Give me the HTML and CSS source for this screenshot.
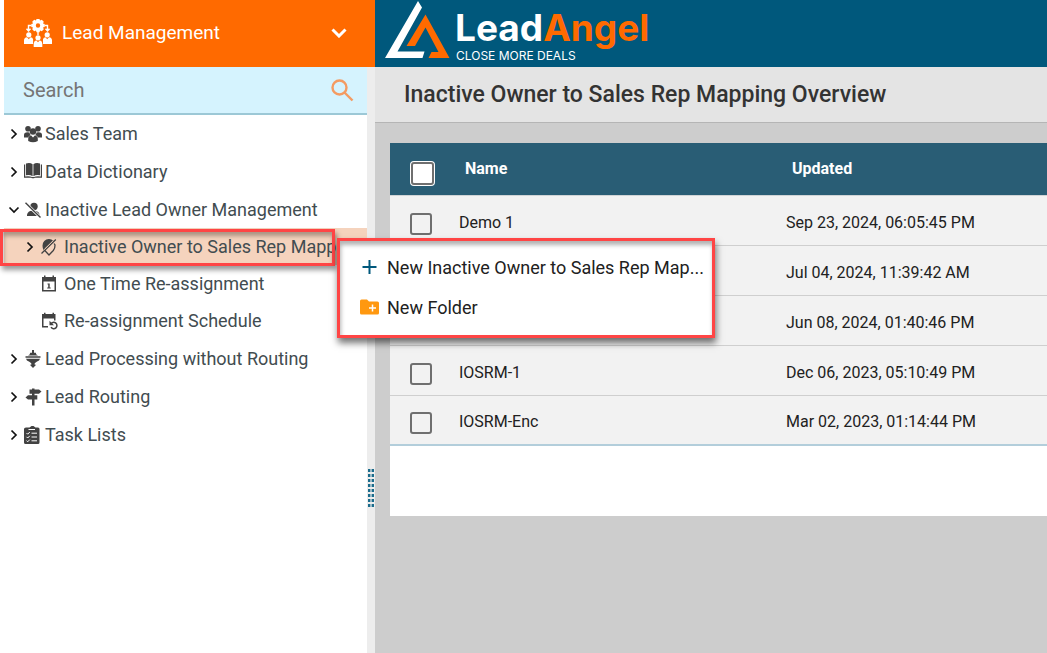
FILE: index.html
```html
<!DOCTYPE html>
<html lang="en">
<head>
  <meta charset="UTF-8">
  <meta name="viewport" content="width=device-width, initial-scale=1.0">
  <title>LeadAngel - Inactive Owner to Sales Rep Mapping</title>
  <link rel="stylesheet" href="styles.css">
</head>
<body>

  <aside class="sidebar">
    <button class="module" type="button">
      <svg class="module-icon" viewBox="0 0 28 28" fill="currentColor">
        <path fill-rule="evenodd" d="M12.500 0h3l.5 1.600 1.800-.8 2 2-.8 1.700 1.700.5v3l-1.700.5.8 1.800-2 2-1.800-.8-.5 1.700h-3l-.5-1.700-1.800.8-2-2 .8-1.800L7.300 8V5l1.700-.5-.8-1.700 2-2 1.800.8zM14 4.300a2.200 2.200 0 1 0 0 4.400a2.200 2.200 0 0 0 0-4.400z"/>
        <path d="M7.500 6.500H4.500V12M20.500 6.500h3V12M14 12v4M2.500 9.800l2 2.200 2-2.200M21.500 9.800l2 2.200 2-2.200" fill="none" stroke="currentColor" stroke-width="1.400"/>
        <circle cx="4.800" cy="15.800" r="2.600"/>
        <circle cx="23.200" cy="15.800" r="2.600"/>
        <circle cx="14" cy="18.800" r="2.600"/>
        <path d="M0 25v-3.500q0-2.800 3-3.200l1.800 2 1.800-2q2 .2 2.500 2V25zM19 25v-4.700q.5-1.800 2.500-2l1.700 2 1.800-2q3 .4 3 3.200V25zM9.700 28v-3.300q0-2.800 2.500-3.400l1.800 2 1.800-2q2.500.6 2.500 3.400V28z"/>
      </svg>
      <span class="module-name">Lead Management</span>
      <svg class="module-arrow" viewBox="0 0 16 10" fill="none" stroke="currentColor" stroke-width="3"><path d="M1.500 1.500L8 8l6.500-6.500"/></svg>
    </button>

    <div class="sidebar-body">
      <nav class="panel">
        <div class="search">
          <input type="text" placeholder="Search" aria-label="Search">
          <svg viewBox="0 0 24 24" fill="none" stroke="currentColor" stroke-width="2.400"><circle cx="9.500" cy="9.500" r="7"/><path d="M14.500 14.500l8 8"/></svg>
        </div>

        <ul class="tree">
          <li>
            <a class="node" href="#">
              <svg class="arrow" viewBox="0 0 12 12"><path d="M3.500 1.500L8 6l-4.500 4.500"/></svg>
              <svg class="icon" viewBox="0 0 18 18">
                <circle cx="4" cy="3.700" r="2.800"/><circle cx="14" cy="3.700" r="2.800"/><circle cx="9" cy="6.500" r="3.200"/>
                <path d="M0 12.500V10q0-2.800 3.500-2.800 1.300 0 2 .4.300 1.700 1.200 2.400Q4.500 11 4 12.500zM18 12.500V10q0-2.800-3.500-2.800-1.300 0-2 .4-.3 1.700-1.200 2.400 2.200.7 2.700 2.500zM4.200 16v-2.300q.2-2.900 3-3.100L9 12.500l1.800-1.900q2.800.2 3 3.100V16Q9 18.400 4.200 16z"/>
              </svg>
              <span>Sales Team</span>
            </a>
          </li>
          <li>
            <a class="node" href="#">
              <svg class="arrow" viewBox="0 0 12 12"><path d="M3.500 1.500L8 6l-4.500 4.500"/></svg>
              <svg class="icon" viewBox="0 0 18 18">
                <path d="M2 .5Q6-.7 8.600 1.200v12Q6 11.500 2 12.300zM16 .5Q12-.7 9.400 1.200v12q2.600-1.700 6.600-.9z"/>
                <path d="M0 1.500h1.200v12q4-.9 6.800.6h2q2.800-1.500 6.800-.6v-12H18V14.700h-7.200l-.8.600H8l-.8-.6H0z"/>
              </svg>
              <span>Data Dictionary</span>
            </a>
          </li>
          <li>
            <a class="node" href="#">
              <svg class="arrow" viewBox="0 0 12 12"><path d="M1.500 3.500L6 8l4.500-4.500"/></svg>
              <svg class="icon" viewBox="0 0 18 18">
                <circle cx="10" cy="5.500" r="3.700"/><path d="M3 15v-1.500q1-3.500 5-3.700h3q4 .5 4.500 3.700V15z"/>
                <path d="M2.500 3L15.500 15.500" stroke="#fff" stroke-width="3"/><path d="M1.500 1.700L16.500 16.500" stroke="#424242" stroke-width="1.400"/>
              </svg>
              <span>Inactive Lead Owner Management</span>
            </a>
            <ul>
              <li class="selected">
                <a class="node" href="#">
                  <svg class="arrow" viewBox="0 0 12 12"><path d="M3.500 1.500L8 6l-4.500 4.500"/></svg>
                  <svg class="icon" viewBox="0 0 18 18">
                    <path d="M9 1a6 6 0 0 1 4.300 1.700L3.500 12Q2.500 10 2.500 7.700A6.300 6.300 0 0 1 9 1z"/>
                    <path d="M4.800 12.500L9 17l4.300-4.500q1.900-2.300 1.700-5.500l-1-1.500M1.500 15.500L15.800 1.500" fill="none" stroke="#424242" stroke-width="1.300"/>
                    <path d="M4.500 11.200L13 2.800" fill="none" stroke="#f5d3bd" stroke-width="1"/>
                  </svg>
                  <span>Inactive Owner to Sales Rep Mapping</span>
                </a>
                <div class="frame"></div>
                <div class="menu">
                  <button type="button">
                    <svg viewBox="0 0 20 20" fill="none" stroke="#00587c" stroke-width="2"><path d="M9.500 3v14M2.500 10h14"/></svg>
                    <span>New Inactive Owner to Sales Rep Map...</span>
                  </button>
                  <button type="button">
                    <svg viewBox="0 0 20 20"><path fill="#ff9810" d="M1.500 2.500H7l2 2h8.500q1.500 0 1.500 1.500v10q0 1.500-1.500 1.500h-16Q0 17.500 0 16V4q0-1.500 1.500-1.500z"/><path d="M12.500 7.500v7M9 11h7" stroke="#fff" stroke-width="1.500"/></svg>
                    <span>New Folder</span>
                  </button>
                </div>
              </li>
              <li>
                <a class="node leaf" href="#">
                  <svg class="icon" viewBox="0 0 18 18">
                    <path fill-rule="evenodd" d="M4 .5h1.500V2h7V.5H14V2h2v14.500H2V2h2zM3.500 6.500V15h11V6.500z"/>
                    <path d="M7.500 8.500h2.200v4h1v1H7.200v-1h1v-3h-.7z"/>
                  </svg>
                  <span>One Time Re-assignment</span>
                </a>
              </li>
              <li>
                <a class="node leaf" href="#">
                  <svg class="icon" viewBox="0 0 18 18">
                    <path d="M4 .8h1.500V2h7V.8H14V2h1.500v6.500H14v-2H3.500V14H8v1.500H2V2h2z"/>
                    <path d="M10.800 12.200a3.200 3.200 0 1 1 .2 3" fill="none" stroke="#424242" stroke-width="1.500"/><path d="M9.500 8.700v4.500H14z"/>
                  </svg>
                  <span>Re-assignment Schedule</span>
                </a>
              </li>
            </ul>
          </li>
          <li>
            <a class="node" href="#">
              <svg class="arrow" viewBox="0 0 12 12"><path d="M3.500 1.500L8 6l-4.500 4.500"/></svg>
              <svg class="icon" viewBox="0 0 18 18">
                <path d="M8 0h2v2.800h1.800Q11.800 5 14 5.500H4Q6.200 5 6.200 2.800H8zM1.500 6.300h15v1.500h-15zM2 8.700h14q-.3 2-3.300 3l-2 1.500v1.500h1.500L9 18l-3.200-3.300h1.500v-1.500l-2-1.500Q2.300 10.700 2 8.700z"/>
              </svg>
              <span>Lead Processing without Routing</span>
            </a>
          </li>
          <li>
            <a class="node" href="#">
              <svg class="arrow" viewBox="0 0 12 12"><path d="M3.500 1.500L8 6l-4.500 4.500"/></svg>
              <svg class="icon" viewBox="0 0 18 18">
                <path d="M8 .5h2.500V1.500H15l2.500 2-2.500 2.200h-4.500v1.500h2.800v4.300h-2.800v6H8v-6H4L1.500 9.400 4 7.200h4V5.700H5.500V1.500H8z"/>
              </svg>
              <span>Lead Routing</span>
            </a>
          </li>
          <li>
            <a class="node" href="#">
              <svg class="arrow" viewBox="0 0 12 12"><path d="M3.500 1.500L8 6l-4.500 4.500"/></svg>
              <svg class="icon" viewBox="0 0 18 18">
                <path d="M2 1.500h3.500L7.500 0h2l2 1.500H14q1.500 0 1.500 1.500v13.500q0 1.500-1.500 1.500H1.500Q0 18 0 16.500V3q0-1.500 2-1.500z"/>
                <path d="M4.500 3.500h6.500M7.500 7.200h5.500M7.500 11h5.500M7.500 14.800h5.500M2.500 7l1.200 1.200L5.800 6M2.500 10.800L3.700 12l2.100-2.200M2.500 14.600l1.200 1.200 2.100-2.200" fill="none" stroke="#fff" stroke-width="1"/>
              </svg>
              <span>Task Lists</span>
            </a>
          </li>
        </ul>
      </nav>
      <div class="splitter"><div class="grip"></div></div>
    </div>
  </aside>

  <main class="main">
    <header class="topbar">
      <svg class="logo" viewBox="0 0 66 60">
        <path fill="#fff" d="M33 1l4 6.500L12.500 51.500h27L37.500 58H0z"/>
        <path fill="#ff6a00" d="M40.500 14.500L64.500 58H43.500l3-6H53.500L40.500 27.500 30 46h-8.500z"/>
      </svg>
      <div class="brand">
        <div class="brand-name">Lead<span>Angel</span></div>
        <div class="brand-tag">CLOSE MORE DEALS</div>
      </div>
    </header>

    <h1 class="page-title">Inactive Owner to Sales Rep Mapping Overview</h1>

    <section class="content">
      <table class="grid">
        <thead>
          <tr>
            <th class="check"><input type="checkbox" aria-label="Select all"></th>
            <th class="name">Name</th>
            <th>Updated</th>
          </tr>
        </thead>
        <tbody>
          <tr>
            <td class="check"><input type="checkbox" aria-label="Select Demo 1"></td>
            <td>Demo 1</td>
            <td>Sep 23, 2024, 06:05:45 PM</td>
          </tr>
          <tr>
            <td class="check"><input type="checkbox" aria-label="Select row"></td>
            <td></td>
            <td>Jul 04, 2024, 11:39:42 AM</td>
          </tr>
          <tr>
            <td class="check"><input type="checkbox" aria-label="Select row"></td>
            <td></td>
            <td>Jun 08, 2024, 01:40:46 PM</td>
          </tr>
          <tr>
            <td class="check"><input type="checkbox" aria-label="Select IOSRM-1"></td>
            <td>IOSRM-1</td>
            <td>Dec 06, 2023, 05:10:49 PM</td>
          </tr>
          <tr>
            <td class="check"><input type="checkbox" aria-label="Select IOSRM-Enc"></td>
            <td>IOSRM-Enc</td>
            <td>Mar 02, 2023, 01:14:44 PM</td>
          </tr>
        </tbody>
      </table>
    </section>
  </main>

</body>
</html>
```
FILE: styles.css
```css
* {
  box-sizing: border-box;
}

body {
  margin: 0;
  display: flex;
  min-height: 100vh;
  background: #fff;
  color: #212121;
  font-family: Roboto, "Liberation Sans", sans-serif;
  font-size: 16px;
}

button {
  font-family: inherit;
  border: none;
  cursor: pointer;
}

svg {
  flex: none;
}

/* Sidebar */
.sidebar {
  flex: none;
  width: 375px;
  padding-left: 4px;
  display: flex;
  flex-direction: column;
}

.module {
  display: flex;
  align-items: center;
  height: 67px;
  padding: 0 28px 2px 20px;
  background: #ff6a00;
  color: #fff;
  font-size: 19px;
  text-align: left;
}

.module-icon {
  width: 28px;
  height: 28px;
}

.module-name {
  flex: 1;
  padding-left: 10px;
}

.module-arrow {
  width: 16px;
  height: 10px;
}

.sidebar-body {
  flex: 1;
  display: flex;
}

.panel {
  flex: 1;
  min-width: 0;
}

.search {
  display: flex;
  align-items: center;
  height: 48px;
  padding: 0 13px 0 19px;
  background: #d5f3fe;
  border-bottom: 2px solid #9cc8d6;
  color: #f49b62;
}

.search input {
  flex: 1;
  min-width: 0;
  padding: 0;
  border: none;
  outline: none;
  background: transparent;
  font-family: inherit;
  font-size: 20px;
}

.search input::placeholder {
  color: #757575;
}

.search svg {
  width: 24px;
  height: 24px;
}

.tree,
.tree ul {
  list-style: none;
  margin: 0;
  padding: 0;
}

.tree > li {
  margin-bottom: 1px;
}

.node {
  display: flex;
  align-items: center;
  height: 37px;
  padding-left: 4px;
  overflow: hidden;
  white-space: nowrap;
  color: #424c50;
  font-size: 18px;
  text-decoration: none;
}

.tree ul .node {
  padding-left: 20px;
}

.tree ul .leaf {
  padding-left: 36px;
}

.arrow {
  width: 12px;
  height: 12px;
  margin-right: 4px;
  fill: none;
  stroke: #111;
  stroke-width: 1.7;
}

.icon {
  width: 18px;
  height: 18px;
  margin-right: 3px;
  fill: #424242;
}

.tree ul .icon {
  margin-right: 6px;
}

.selected {
  position: relative;
  background: #f5d3bd;
}

/* Red outline and context menu lie over the page */
.frame {
  position: absolute;
  left: -4px;
  top: 1px;
  width: 335px;
  height: 37px;
  border: 3px solid #ff4545;
  box-shadow: 2px 4px 5px rgba(0, 0, 0, 0.4), inset 1px 4px 4px rgba(0, 0, 0, 0.3);
}

.menu {
  position: absolute;
  z-index: 10;
  left: 333px;
  top: 10px;
  width: 378px;
  padding: 6px 8px 8px 20px;
  background: #fff;
  border: 3px solid #ff4545;
  box-shadow: 1px 5px 7px rgba(0, 0, 0, 0.55), inset 1px 4px 4px rgba(0, 0, 0, 0.3);
}

.menu button {
  display: flex;
  align-items: center;
  width: 100%;
  height: 40px;
  padding: 0;
  background: none;
  color: #212121;
  font-size: 18px;
}

.menu svg {
  width: 20px;
  height: 20px;
  margin-right: 7px;
}

.menu span {
  white-space: nowrap;
}

.splitter {
  width: 8px;
  display: flex;
  align-items: flex-start;
  justify-content: center;
  padding-top: 402px;
  background: #ededed;
}

.grip {
  width: 6px;
  height: 38px;
  background:
    linear-gradient(to right, transparent 2px, rgba(237, 237, 237, 0.6) 2px 4px, transparent 4px),
    repeating-linear-gradient(to bottom, #1b6c8c 0 3px, #ededed 3px 5px);
}

/* Main area */
.main {
  flex: 1;
  min-width: 0;
  display: flex;
  flex-direction: column;
  background: #cdcdcd;
}

.topbar {
  display: flex;
  align-items: center;
  height: 67px;
  padding-left: 10px;
  background: #00587c;
}

.logo {
  width: 66px;
  height: 60px;
  margin-bottom: 7px;
}

.brand {
  padding-left: 4px;
  color: #fff;
}

.brand-name {
  font-family: Inter, sans-serif;
  font-size: 37px;
  font-weight: 700;
  line-height: 45px;
}

.brand-name span {
  color: #ff6a00;
}

.brand-tag {
  padding-left: 1px;
  font-family: Inter, sans-serif;
  font-size: 12px;
  line-height: 12px;
}

.page-title {
  margin: 0;
  padding: 0 29px;
  background: #e4e4e4;
  border-bottom: 1px solid #b5b5b5;
  color: #333;
  font-size: 23px;
  font-weight: 500;
  line-height: 55px;
}

.content {
  margin: 20px 0 0 15px;
  padding-bottom: 70px;
  background: #fff;
}

.grid {
  width: 100%;
  border-collapse: collapse;
  table-layout: fixed;
}

.grid th,
.grid td {
  padding: 0;
  text-align: left;
}

.grid th {
  height: 52px;
  background: #295d75;
  border-bottom: 1px solid #d0d4d6;
  color: #fff;
  font-weight: 700;
  padding-left: 6px;
}

.grid td {
  height: 50px;
  padding-top: 4px;
  background: #f2f2f2;
  border-bottom: 1px solid #cfcfcf;
}

.grid tbody tr:last-child td {
  border-bottom: 2px solid #b3cedb;
}

.grid .check {
  width: 69px;
  padding-left: 20px;
}

.grid .name {
  width: 327px;
}

.grid input {
  appearance: none;
  display: block;
  width: 22px;
  height: 22px;
  margin: 3px 0 0;
  background: transparent;
  border: 2px solid #6f6f6f;
  border-radius: 3px;
}

.grid th input {
  width: 23px;
  height: 23px;
  margin: 9px 0 0 1px;
  background: #fff;
  box-shadow: 0 0 0 1px #fff;
}
```
